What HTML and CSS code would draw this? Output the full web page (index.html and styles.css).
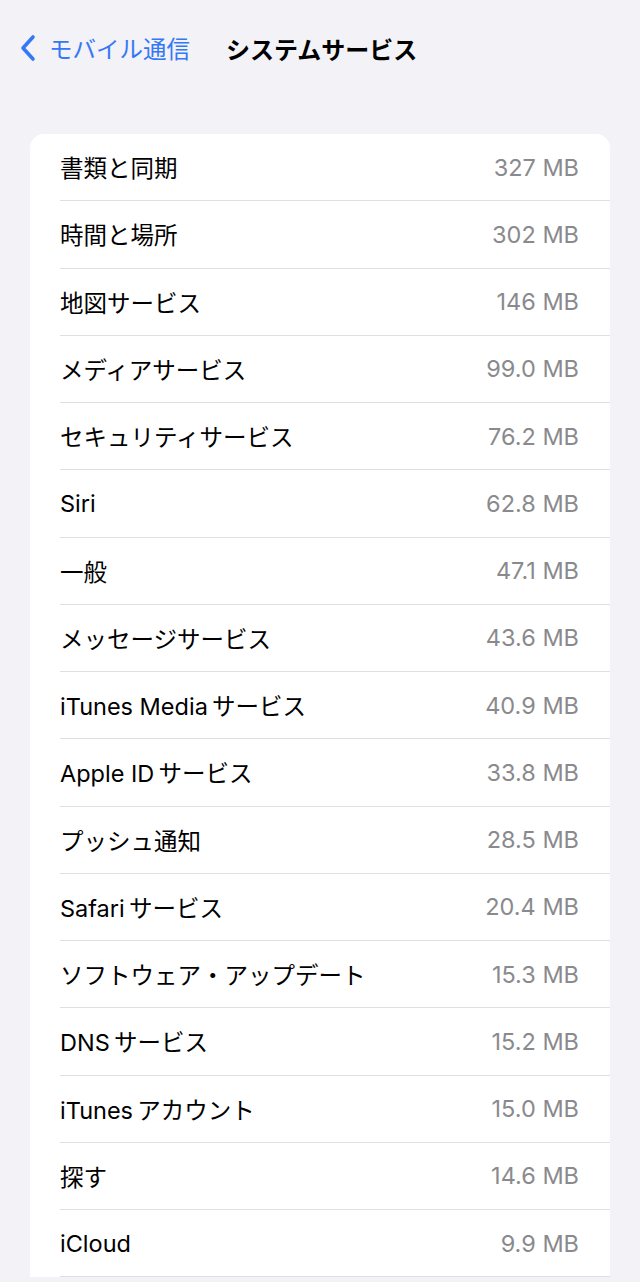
FILE: index.html
```html
<!DOCTYPE html>
<html lang="ja">
<head>
    <meta charset="UTF-8">
    <meta name="viewport" content="width=device-width, initial-scale=1.0">
    <title>システムサービス</title>
    <link rel="stylesheet" href="styles.css">
</head>
<body>
    <div class="nav-bar">
        <a class="back-link" href="#">
            <svg class="chevron" width="18" height="28" viewBox="0 0 18 28">
                <path d="M14 3 L4 14 L14 25" fill="none" stroke="#3478f6" stroke-width="3.6" stroke-linecap="round" stroke-linejoin="round"/>
            </svg>
            <span>モバイル通信</span>
        </a>
        <h1 class="nav-title">システムサービス</h1>
    </div>

    <div class="list-card">
        <div class="list-row"><span class="label">書類と同期</span><span class="value">327 MB</span></div>
        <div class="list-row"><span class="label">時間と場所</span><span class="value">302 MB</span></div>
        <div class="list-row"><span class="label">地図サービス</span><span class="value">146 MB</span></div>
        <div class="list-row"><span class="label">メディアサービス</span><span class="value">99.0 MB</span></div>
        <div class="list-row"><span class="label">セキュリティサービス</span><span class="value">76.2 MB</span></div>
        <div class="list-row"><span class="label">Siri</span><span class="value">62.8 MB</span></div>
        <div class="list-row"><span class="label">一般</span><span class="value">47.1 MB</span></div>
        <div class="list-row"><span class="label">メッセージサービス</span><span class="value">43.6 MB</span></div>
        <div class="list-row"><span class="label">iTunes Media&thinsp;サービス</span><span class="value">40.9 MB</span></div>
        <div class="list-row"><span class="label">Apple ID&thinsp;サービス</span><span class="value">33.8 MB</span></div>
        <div class="list-row"><span class="label">プッシュ通知</span><span class="value">28.5 MB</span></div>
        <div class="list-row"><span class="label">Safari&thinsp;サービス</span><span class="value">20.4 MB</span></div>
        <div class="list-row"><span class="label">ソフトウェア・アップデート</span><span class="value">15.3 MB</span></div>
        <div class="list-row"><span class="label">DNS&thinsp;サービス</span><span class="value">15.2 MB</span></div>
        <div class="list-row"><span class="label">iTunes&thinsp;アカウント</span><span class="value">15.0 MB</span></div>
        <div class="list-row"><span class="label">探す</span><span class="value">14.6 MB</span></div>
        <div class="list-row"><span class="label">iCloud</span><span class="value">9.9 MB</span></div>
    </div>
</body>
</html>
```

FILE: styles.css
```css
body {
    margin: 0;
    background-color: #f2f2f7;
    font-family: "Inter", "Noto Sans CJK JP", sans-serif;
    color: #000;
    overflow: hidden;
}
.nav-bar {
    display: flex;
    align-items: center;
    height: 96px;
    padding-left: 19px;
}
.back-link {
    display: flex;
    align-items: center;
    gap: 12px;
    color: #3478f6;
    text-decoration: none;
    font-size: 23.5px;
}
.nav-title {
    margin: 0 0 0 36px;
    font-size: 24px;
    font-weight: 700;
}
.list-card {
    margin: 38px 30px 0 30px;
    background: white;
    border-radius: 14px 14px 0 0;
    padding-left: 30px;
}
.list-row {
    display: flex;
    justify-content: space-between;
    align-items: center;
    height: 66.25px;
    padding-right: 31px;
    border-bottom: 1px solid #e0e0e4;
    font-size: 23.5px;
}
.value {
    color: #8a8a8e;
}
```
